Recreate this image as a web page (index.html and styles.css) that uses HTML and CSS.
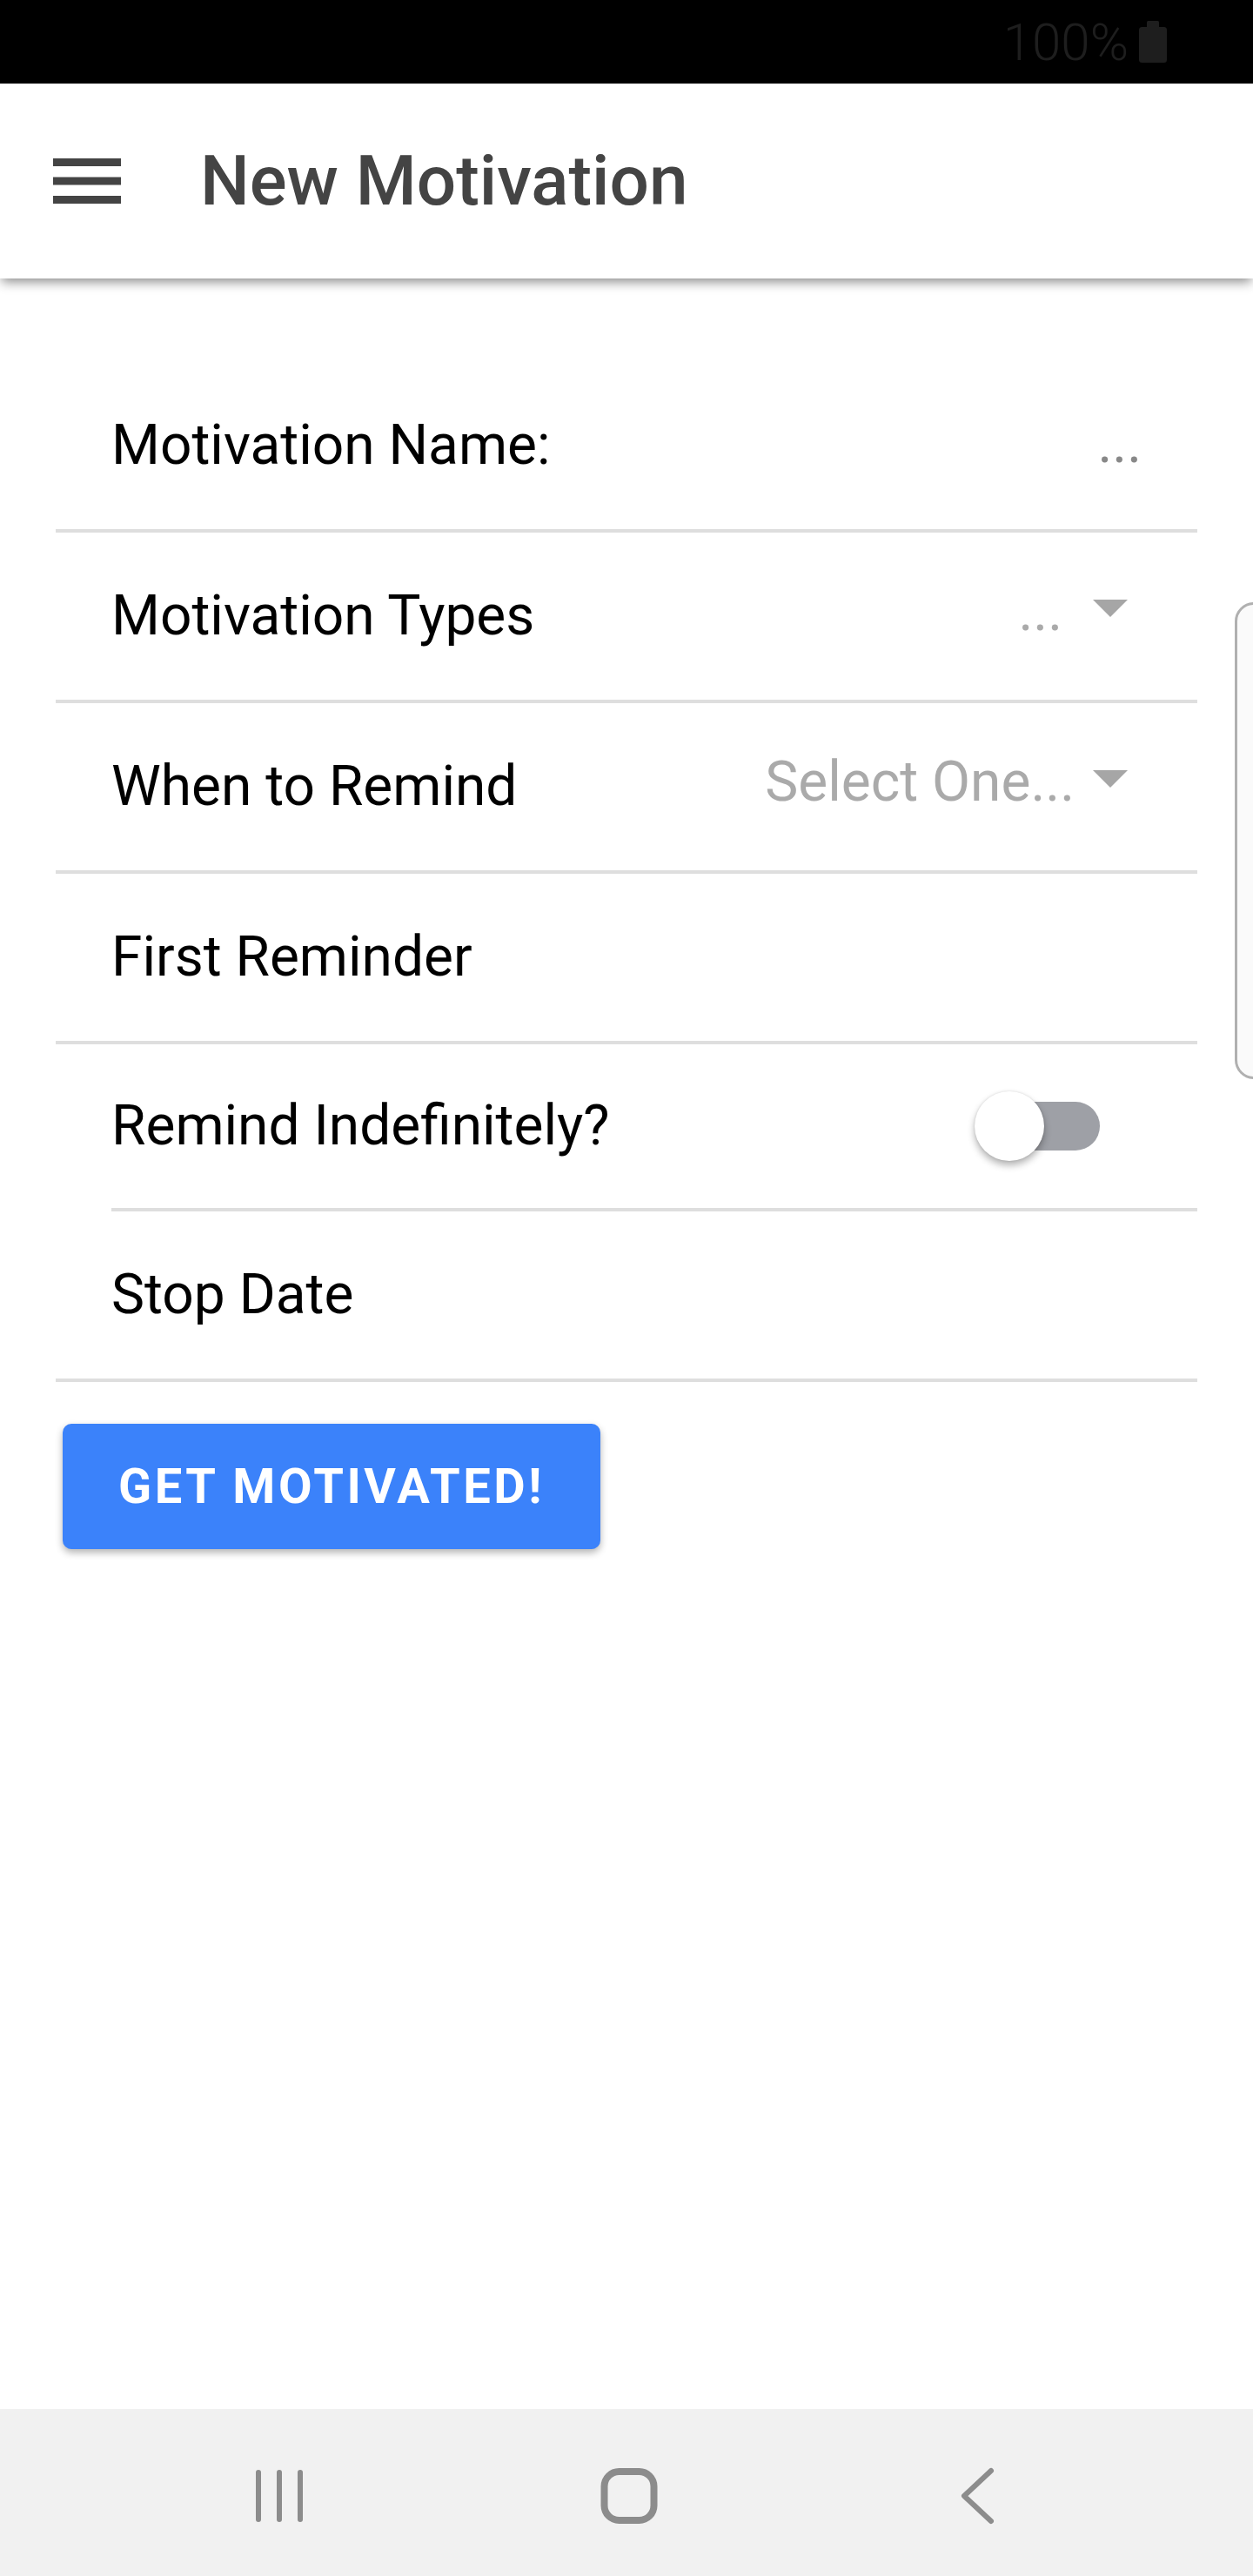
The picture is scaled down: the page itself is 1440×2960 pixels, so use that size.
FILE: index.html
```html
<!DOCTYPE html>
<html lang="en">
<head>
<meta charset="utf-8">
<title>New Motivation</title>
<link rel="stylesheet" href="styles.css">
</head>
<body>
<div class="screen">
  <div class="status-bar">
    <span class="battery-text">100%</span>
    <svg class="battery" width="32" height="48" viewBox="0 0 32 48"><rect x="9" y="0" width="14" height="9" rx="1.5" fill="#1e1e1e"/><rect x="0" y="7" width="32" height="41" rx="3.5" fill="#1e1e1e"/></svg>
  </div>
  <header class="app-bar">
    <svg class="menu-icon" width="78" height="52" viewBox="0 0 78 52"><rect x="0" y="0" width="78" height="9" fill="#444"/><rect x="0" y="21.5" width="78" height="9" fill="#444"/><rect x="0" y="43" width="78" height="9" fill="#444"/></svg>
    <h1 class="title">New Motivation</h1>
  </header>
  <main class="content">
    <div class="form-list">
      <div class="row">
        <span class="label">Motivation Name:</span>
        <span class="placeholder dark">...</span>
      </div>
      <div class="row">
        <span class="label">Motivation Types</span>
        <span class="picker"><span class="placeholder">...</span><span class="caret"></span></span>
      </div>
      <div class="row">
        <span class="label">When to Remind</span>
        <span class="picker picker-tight"><span class="placeholder">Select One...</span><span class="caret"></span></span>
      </div>
      <div class="row">
        <span class="label">First Reminder</span>
      </div>
      <div class="row row-inset">
        <span class="label">Remind Indefinitely?</span>
        <span class="switch"><span class="track"></span><span class="thumb"></span></span>
      </div>
      <div class="row">
        <span class="label">Stop Date</span>
      </div>
    </div>
    <button class="cta">GET MOTIVATED!</button>
    <div class="edge-handle"></div>
  </main>
  <nav class="nav-bar">
    <svg class="nav-icon" width="80" height="80" viewBox="0 0 80 80"><g stroke="#8c8c8c" stroke-width="6" stroke-linecap="round"><line x1="16" y1="13" x2="16" y2="67"/><line x1="40" y1="13" x2="40" y2="67"/><line x1="64" y1="13" x2="64" y2="67"/></g></svg>
    <svg class="nav-icon" width="80" height="80" viewBox="0 0 80 80"><rect x="11.5" y="12" width="57" height="56" rx="17" fill="none" stroke="#8c8c8c" stroke-width="8"/></svg>
    <svg class="nav-icon" width="80" height="80" viewBox="0 0 80 80"><polyline points="54,11 23,40 54,69" fill="none" stroke="#8c8c8c" stroke-width="6" stroke-linecap="round" stroke-linejoin="round"/></svg>
  </nav>
</div>
</body>
</html>
```

FILE: styles.css
```css
* { box-sizing: border-box; }
html, body { margin: 0; padding: 0; }
body {
  font-family: Roboto, "Noto Sans", "Liberation Sans", sans-serif;
  background: #fff;
  color: #000;
}
.screen {
  width: 1440px;
  height: 2960px;
  display: flex;
  flex-direction: column;
  overflow: hidden;
}
.status-bar {
  height: 96px;
  flex: none;
  background: #000;
  display: flex;
  align-items: center;
  justify-content: flex-end;
  padding-right: 99px;
  gap: 12px;
}
.battery-text {
  font-size: 60px;
  font-weight: 300;
  color: #1e1e1e;
  line-height: 1;
  margin-top: 2px;
}
.battery { display: block; }
.app-bar {
  height: 224px;
  flex: none;
  background: #fff;
  display: flex;
  align-items: center;
  padding-left: 61px;
  box-shadow: 0 6px 12px -2px rgba(0, 0, 0, 0.45);
  position: relative;
  z-index: 2;
}
.menu-icon { display: block; }
.title {
  margin: 0 0 0 91px;
  font-size: 80px;
  font-weight: 500;
  color: #444;
  line-height: 1;
}
.content {
  flex: 1;
  padding-top: 96px;
  position: relative;
}
.form-list {
  margin: 0 64px;
}
.row {
  height: 196px;
  border-bottom: 4px solid #dedede;
  display: flex;
  align-items: center;
  justify-content: space-between;
  padding: 0 64px;
}
.row-inset {
  height: 192px;
  margin-left: 64px;
  padding-left: 0;
  padding-right: 112px;
}
.label {
  font-size: 64px;
  line-height: 1.2;
  color: #000;
}
.placeholder {
  font-size: 64px;
  line-height: 1.2;
  color: #aaa;
}
.placeholder.dark {
  color: #888;
  margin-bottom: 4px;
}
.picker {
  display: flex;
  align-items: center;
  gap: 35px;
  margin-right: 16px;
  margin-bottom: 9px;
}
.picker-tight { gap: 21px; }
.caret {
  width: 0;
  height: 0;
  border-left: 20px solid transparent;
  border-right: 20px solid transparent;
  border-top: 20px solid #a6a6a6;
  margin-top: -8px;
}
.switch {
  position: relative;
  width: 144px;
  height: 80px;
  display: block;
}
.track {
  position: absolute;
  left: 8px;
  top: 12px;
  width: 136px;
  height: 56px;
  border-radius: 28px;
  background: #9ea0a6;
}
.thumb {
  position: absolute;
  left: 0;
  top: 0;
  width: 80px;
  height: 80px;
  border-radius: 50%;
  background: #fff;
  box-shadow: 0 5px 8px rgba(0, 0, 0, 0.3), 0 0 3px rgba(0, 0, 0, 0.12);
}
.cta {
  margin: 48px 0 0 72px;
  height: 144px;
  padding: 0 64px;
  border: none;
  border-radius: 10px;
  background: #3b82fa;
  color: #fff;
  font-family: Roboto, "Noto Sans", sans-serif;
  font-size: 56px;
  font-weight: 700;
  letter-spacing: 3.5px;
  box-shadow: 0 4px 8px rgba(0, 0, 0, 0.3);
}
.edge-handle {
  position: absolute;
  left: 1419px;
  top: 372px;
  width: 60px;
  height: 548px;
  border: 3px solid #b0b0b0;
  border-radius: 22px;
  background: #fafafa;
}
.nav-bar {
  height: 192px;
  flex: none;
  background: #f1f1f1;
  display: flex;
  align-items: center;
  justify-content: center;
  gap: 322px;
  padding-left: 5px;
  padding-top: 8px;
}
.nav-icon { display: block; }
```
